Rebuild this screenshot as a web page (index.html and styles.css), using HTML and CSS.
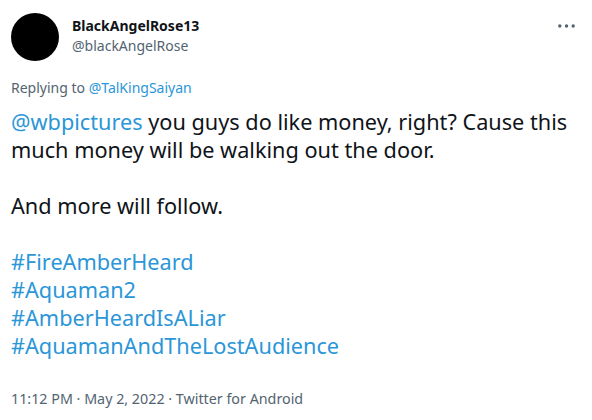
FILE: index.html
```html
<!DOCTYPE html>
<html lang="en">
<head>
    <meta charset="UTF-8">
    <title>Tweet</title>
    <link rel="stylesheet" href="styles.css">
</head>
<body>
    <div class="tweet">
      <div class="tweet-header">
        <div class="avatar"></div>
        <div class="author">
          <span class="author-name">BlackAngelRose13</span>
          <span class="author-handle">@blackAngelRose</span>
        </div>
        <div class="more-btn" title="More">
          <svg width="17" height="4" viewBox="0 0 17 4"><circle cx="1.8" cy="2" r="1.7"/><circle cx="8.5" cy="2" r="1.7"/><circle cx="15.2" cy="2" r="1.7"/></svg>
        </div>
      </div>

      <div class="reply-to">Replying to <a href="#">@TalKingSaiyan</a></div>

      <div class="tweet-text">
        <p><a href="#">@wbpictures</a> you guys do like money, right? Cause this much money will be walking out the door.</p>
        <p>And more will follow.</p>
        <p class="tags">
          <a href="#">#FireAmberHeard</a><br>
          <a href="#">#Aquaman2</a><br>
          <a href="#">#AmberHeardIsALiar</a><br>
          <a href="#">#AquamanAndTheLostAudience</a>
        </p>
      </div>

      <div class="tweet-meta">11:12 PM · May 2, 2022 · Twitter for Android</div>
    </div>
</body>
</html>
```

FILE: styles.css
```css
body {
  margin: 0;
  background: #ffffff;
  font-family: "Noto Sans", "Open Sans", sans-serif;
  color: #0f1419;
}

a {
  color: #2b96d8;
  text-decoration: none;
}

.tweet {
  padding: 13px 11px 0 11px;
}

.tweet-header {
  display: flex;
  align-items: flex-start;
}
.avatar {
  width: 48px;
  height: 48px;
  border-radius: 50%;
  background: #000000;
  flex-shrink: 0;
}
.author {
  display: flex;
  flex-direction: column;
  margin-left: 13px;
  padding-top: 3px;
  font-size: 14px;
  line-height: 20px;
}
.author-name {
  font-weight: 700;
}
.author-handle {
  color: #536471;
}
.more-btn {
  display: flex;
  margin-left: auto;
  margin-right: 6px;
  margin-top: 11px;
  fill: #536471;
}

.reply-to {
  margin-top: 17px;
  font-size: 14px;
  line-height: 20px;
  color: #536471;
}

.tweet-text {
  margin-top: 10px;
  font-size: 21.7px;
  line-height: 28px;
}
.tweet-text p {
  margin: 0 0 28px 0;
}
.tweet-text p.tags {
  margin-bottom: 0;
}

.tweet-meta {
  margin-top: 29px;
  font-size: 14.3px;
  line-height: 20px;
  color: #536471;
}
```
